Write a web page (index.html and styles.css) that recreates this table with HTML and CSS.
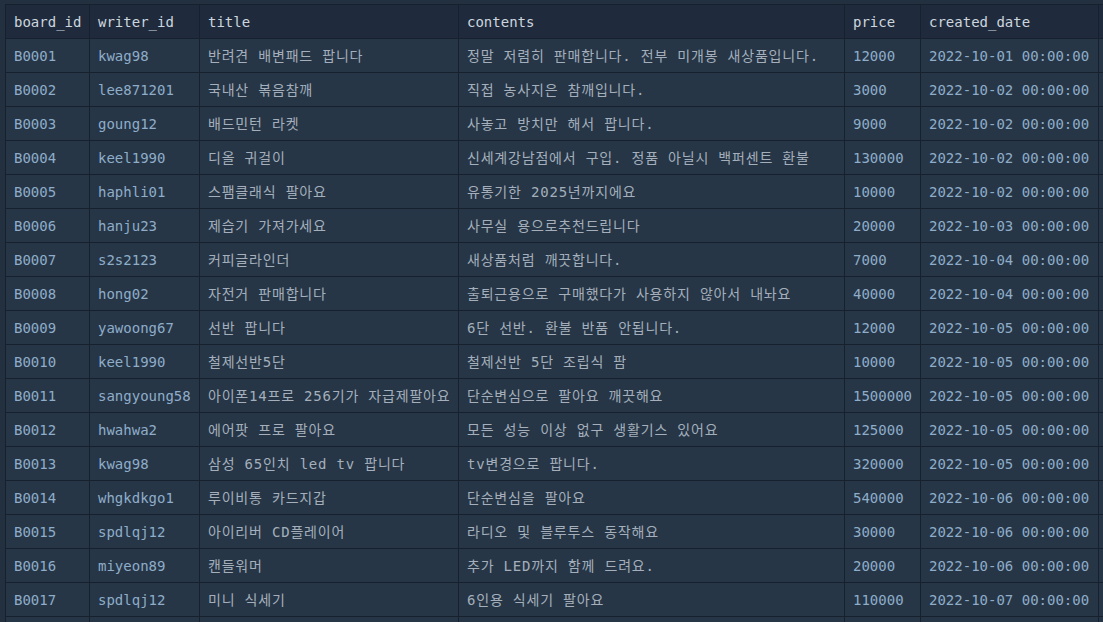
FILE: index.html
```html
<!DOCTYPE html>
<html lang="ko">
<head>
    <meta charset="UTF-8">
    <meta name="viewport" content="width=device-width, initial-scale=1.0">
    <title>board</title>
    <link rel="stylesheet" href="styles.css">
</head>
<body>

    <!-- Result Grid -->
    <div class="result-grid">
        <table class="grid">
            <colgroup>
                <col class="c-id">
                <col class="c-writer">
                <col class="c-title">
                <col class="c-contents">
                <col class="c-price">
                <col class="c-date">
                <col class="c-more">
            </colgroup>
            <thead>
                <tr>
                    <th>board_id</th>
                    <th>writer_id</th>
                    <th>title</th>
                    <th>contents</th>
                    <th>price</th>
                    <th>created_date</th>
                    <th></th>
                </tr>
            </thead>
            <tbody>
                <tr><td>B0001</td><td>kwag98</td><td class="ko">반려견 배변패드 팝니다</td><td class="ko">정말 저렴히 판매합니다. 전부 미개봉 새상품입니다.</td><td>12000</td><td>2022-10-01 00:00:00</td><td></td></tr>
                <tr><td>B0002</td><td>lee871201</td><td class="ko">국내산 볶음참깨</td><td class="ko">직접 농사지은 참깨입니다.</td><td>3000</td><td>2022-10-02 00:00:00</td><td></td></tr>
                <tr><td>B0003</td><td>goung12</td><td class="ko">배드민턴 라켓</td><td class="ko">사놓고 방치만 해서 팝니다.</td><td>9000</td><td>2022-10-02 00:00:00</td><td></td></tr>
                <tr><td>B0004</td><td>keel1990</td><td class="ko">디올 귀걸이</td><td class="ko">신세계강남점에서 구입. 정품 아닐시 백퍼센트 환불</td><td>130000</td><td>2022-10-02 00:00:00</td><td></td></tr>
                <tr><td>B0005</td><td>haphli01</td><td class="ko">스팸클래식 팔아요</td><td class="ko">유통기한 2025년까지에요</td><td>10000</td><td>2022-10-02 00:00:00</td><td></td></tr>
                <tr><td>B0006</td><td>hanju23</td><td class="ko">제습기 가져가세요</td><td class="ko">사무실 용으로추천드립니다</td><td>20000</td><td>2022-10-03 00:00:00</td><td></td></tr>
                <tr><td>B0007</td><td>s2s2123</td><td class="ko">커피글라인더</td><td class="ko">새상품처럼 깨끗합니다.</td><td>7000</td><td>2022-10-04 00:00:00</td><td></td></tr>
                <tr><td>B0008</td><td>hong02</td><td class="ko">자전거 판매합니다</td><td class="ko">출퇴근용으로 구매했다가 사용하지 않아서 내놔요</td><td>40000</td><td>2022-10-04 00:00:00</td><td></td></tr>
                <tr><td>B0009</td><td>yawoong67</td><td class="ko">선반 팝니다</td><td class="ko">6단 선반. 환불 반품 안됩니다.</td><td>12000</td><td>2022-10-05 00:00:00</td><td></td></tr>
                <tr><td>B0010</td><td>keel1990</td><td class="ko">철제선반5단</td><td class="ko">철제선반 5단 조립식 팜</td><td>10000</td><td>2022-10-05 00:00:00</td><td></td></tr>
                <tr><td>B0011</td><td>sangyoung58</td><td class="ko">아이폰14프로 256기가 자급제팔아요</td><td class="ko">단순변심으로 팔아요 깨끗해요</td><td>1500000</td><td>2022-10-05 00:00:00</td><td></td></tr>
                <tr><td>B0012</td><td>hwahwa2</td><td class="ko">에어팟 프로 팔아요</td><td class="ko">모든 성능 이상 없구 생활기스 있어요</td><td>125000</td><td>2022-10-05 00:00:00</td><td></td></tr>
                <tr><td>B0013</td><td>kwag98</td><td class="ko">삼성 65인치 led tv 팝니다</td><td class="ko">tv변경으로 팝니다.</td><td>320000</td><td>2022-10-05 00:00:00</td><td></td></tr>
                <tr><td>B0014</td><td>whgkdkgo1</td><td class="ko">루이비통 카드지갑</td><td class="ko">단순변심을 팔아요</td><td>540000</td><td>2022-10-06 00:00:00</td><td></td></tr>
                <tr><td>B0015</td><td>spdlqj12</td><td class="ko">아이리버 CD플레이어</td><td class="ko">라디오 및 블루투스 동작해요</td><td>30000</td><td>2022-10-06 00:00:00</td><td></td></tr>
                <tr><td>B0016</td><td>miyeon89</td><td class="ko">캔들워머</td><td class="ko">추가 LED까지 함께 드려요.</td><td>20000</td><td>2022-10-06 00:00:00</td><td></td></tr>
                <tr><td>B0017</td><td>spdlqj12</td><td class="ko">미니 식세기</td><td class="ko">6인용 식세기 팔아요</td><td>110000</td><td>2022-10-07 00:00:00</td><td></td></tr>
                <tr><td></td><td></td><td></td><td></td><td></td><td></td><td></td></tr>
            </tbody>
        </table>
    </div>

</body>
</html>
```

FILE: styles.css
```css
/* General Reset */
* {
    margin: 0;
    padding: 0;
    box-sizing: border-box;
}

html,
body {
    height: 100%;
    overflow: hidden;
}

body {
    background-color: #223040;
    font-family: "DejaVu Sans Mono", "Noto Sans CJK KR", monospace;
    font-size: 14px;
}

/* Result grid */
.result-grid {
    padding: 4px 0 0 5px;
}

.grid {
    border-collapse: collapse;
    table-layout: fixed;
    width: 1194px;
}

.c-id { width: 84px; }
.c-writer { width: 110px; }
.c-title { width: 259px; }
.c-contents { width: 386px; }
.c-price { width: 76px; }
.c-date { width: 178px; }
.c-more { width: 101px; }

.grid th,
.grid td {
    height: 34px;
    padding: 0 8px;
    border: 1px solid #17212e;
    text-align: left;
    vertical-align: middle;
    white-space: nowrap;
    overflow: hidden;
    line-height: 20px;
}

.grid th {
    background-color: #1f2b3c;
    color: #cdd6df;
    font-weight: normal;
}

.grid td {
    background-color: #263647;
    color: #8fadc9;
}

/* korean text renders wider and greyer in the grid */
.grid td.ko {
    color: #a4afbb;
    letter-spacing: 0.8px;
}
```
